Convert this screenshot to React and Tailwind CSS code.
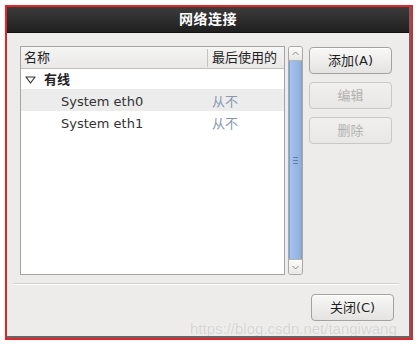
import React from "react";

const cjk = { fontFamily: '"DejaVu Sans", "Noto Sans CJK SC", sans-serif' };

function Btn({ children, disabled, className = "" }) {
  return (
    <div
      className={
        "flex items-center justify-center rounded-[4px] border text-[13px] " +
        (disabled
          ? "border-[#c9c8c6] bg-gradient-to-b from-[#f1f0ef] to-[#e8e7e5] text-[#b3b2b0] "
          : "border-[#a3a2a0] bg-gradient-to-b from-[#f8f8f7] to-[#e4e3e1] text-[#1f1f1f] shadow-[inset_0_1px_0_#ffffff] ") +
        className
      }
    >
      {children}
    </div>
  );
}

export default function App() {
  return (
    <div className="w-[418px] h-[346px] bg-white pl-[5px] pt-[5px]" style={cjk}>
      <div className="w-[408px] h-[335px] border-2 border-[#e0262b]">
        <div className="relative w-full h-full overflow-hidden bg-[#edeceb] border-r-2 border-b-2 border-[#666666] flex flex-col">
          <div className="h-[26px] shrink-0 bg-gradient-to-b from-[#3c3c3c] to-[#1f1f1f] border-b border-[#111] flex items-center justify-center">
            <span className="text-white text-[14px] font-bold tracking-[0.5px]">网络连接</span>
          </div>
          <div className="flex pl-[13px] pt-[13px]">
            <div className="w-[265px] h-[229px] border border-[#a5a4a2] bg-white flex flex-col">
              <div className="h-[22px] shrink-0 flex items-center bg-gradient-to-b from-[#f5f5f4] to-[#e9e8e7] border-b border-[#c2c1bf] text-[13px] text-[#222]">
                <div className="w-[186px] pl-[3px]">名称</div>
                <div className="w-px h-[18px] bg-[#c4c3c1]"></div>
                <div className="pl-[4px]">最后使用的</div>
              </div>
              <div className="h-[20px] pt-[2px] flex items-center text-[13px] text-[#222]">
                <svg width="11" height="8" viewBox="0 0 11 8" className="ml-[4px]">
                  <path d="M1 1 L10 1 L5.5 7 Z" fill="none" stroke="#333" strokeWidth="1.2" strokeLinejoin="round" />
                </svg>
                <span className="ml-[8px] font-bold">有线</span>
              </div>
              <div className="h-[22px] pt-[3px] flex items-center bg-[#ececec] text-[13px]">
                <span className="w-[191px] pl-[40px] text-[#333]">System eth0</span>
                <span className="text-[#8797b0]">从不</span>
              </div>
              <div className="h-[22px] pt-[3px] flex items-center text-[13px]">
                <span className="w-[191px] pl-[40px] text-[#333]">System eth1</span>
                <span className="text-[#8797b0]">从不</span>
              </div>
            </div>
            <div className="ml-[3px] w-[15px] h-[229px] flex flex-col rounded-[3px] border border-[#a9a8a6] bg-[#e4e3e1] overflow-hidden">
              <div className="h-[14px] shrink-0 flex items-center justify-center bg-gradient-to-b from-[#fbfbfa] to-[#e9e8e6] border-b border-[#b5b4b2]">
                <svg width="7" height="5" viewBox="0 0 7 5"><path d="M0.5 4 L3.5 1 L6.5 4" fill="none" stroke="#8a8a8a" strokeWidth="1" /></svg>
              </div>
              <div className="flex-1 flex items-center justify-center bg-gradient-to-r from-[#a7c2ea] to-[#8eb0e0] border-x border-[#7fa0d2]">
                <div className="flex flex-col gap-[2px]">
                  <div className="w-[5px] h-px bg-[#5d7fb3]"></div>
                  <div className="w-[5px] h-px bg-[#5d7fb3]"></div>
                  <div className="w-[5px] h-px bg-[#5d7fb3]"></div>
                </div>
              </div>
              <div className="h-[15px] shrink-0 flex items-center justify-center bg-gradient-to-b from-[#fbfbfa] to-[#e9e8e6] border-t border-[#b5b4b2]">
                <svg width="7" height="5" viewBox="0 0 7 5"><path d="M0.5 1 L3.5 4 L6.5 1" fill="none" stroke="#8a8a8a" strokeWidth="1" /></svg>
              </div>
            </div>
            <div className="ml-[6px] pt-[1px] flex flex-col gap-[8px]">
              <Btn className="w-[83px] h-[27px]">添加(A)</Btn>
              <Btn disabled className="w-[83px] h-[27px]">编辑</Btn>
              <Btn disabled className="w-[83px] h-[27px]">删除</Btn>
            </div>
          </div>
          <div className="ml-[6px] mr-[10px] mt-[8px] h-px bg-[#d3d2d0] border-b border-white box-content"></div>
          <div className="flex justify-end pr-[15px] mt-[9px]">
            <Btn className="w-[83px] h-[27px]">关闭(C)</Btn>
          </div>
          <div
            className="absolute left-[183px] top-[311px] text-[15px] whitespace-nowrap text-[#d4d4d4]"
            style={{ fontFamily: '"Liberation Sans", Arial, sans-serif', textShadow: "0 0 1px #ffffff" }}
          >
            https://blog.csdn.net/tangiwang
          </div>
        </div>
      </div>
    </div>
  );
}
